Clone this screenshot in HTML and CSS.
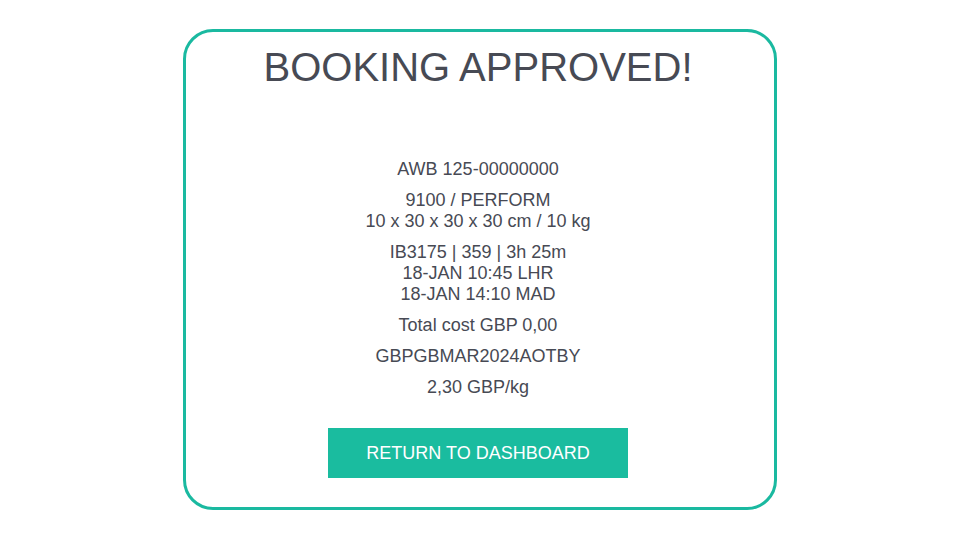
FILE: index.html
```html
<!DOCTYPE html>
<html>
<head>
<meta charset="utf-8">
<link rel="stylesheet" href="styles.css">
</head>
<body>
<div class="card">
  <h1 class="title">BOOKING APPROVED!</h1>
  <div class="details">
    <p>AWB 125-00000000</p>
    <p>9100 / PERFORM<br>10 x 30 x 30 x 30 cm / 10 kg</p>
    <p>IB3175 | 359 | 3h 25m<br>18-JAN 10:45 LHR<br>18-JAN 14:10 MAD</p>
    <p>Total cost GBP 0,00</p>
    <p>GBPGBMAR2024AOTBY</p>
    <p>2,30 GBP/kg</p>
  </div>
  <button class="btn">RETURN TO DASHBOARD</button>
</div>
</body>
</html>
```
FILE: styles.css
```css
html, body {
  margin: 0;
  padding: 0;
  background: #ffffff;
}
body {
  font-family: "Liberation Sans", Arial, sans-serif;
  color: #474a54;
}
.card {
  box-sizing: border-box;
  width: 594px;
  height: 481px;
  margin: 29px auto 0;
  padding-right: 4px;
  border: 3px solid #1ab9a0;
  border-radius: 30px;
  display: flex;
  flex-direction: column;
  align-items: center;
}
.title {
  margin: 12px 0 0;
  font-size: 40px;
  font-weight: 400;
  line-height: 46px;
  color: #474a54;
}
.details {
  margin-top: 69px;
  display: flex;
  flex-direction: column;
  align-items: center;
  gap: 10px;
  text-align: center;
  font-size: 18px;
  line-height: 21px;
}
.details p {
  margin: 0;
}
.btn {
  margin-top: 30px;
  width: 300px;
  height: 50px;
  border: none;
  background: #1abc9f;
  color: #ffffff;
  font-family: "Liberation Sans", Arial, sans-serif;
  font-size: 18px;
  padding: 0;
}
```
